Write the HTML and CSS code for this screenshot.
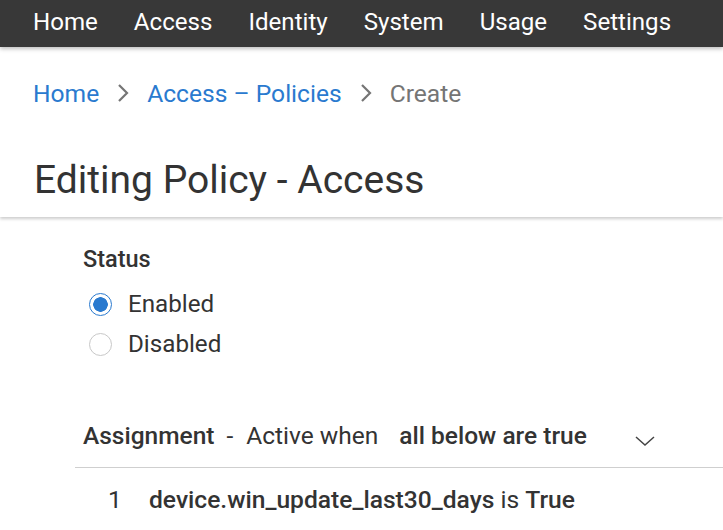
FILE: index.html
```html
<!DOCTYPE html>
<html lang="en">
<head>
<meta charset="utf-8">
<title>Editing Policy - Access</title>
<link rel="stylesheet" href="styles.css">
</head>
<body>
<header class="topbar">
  <nav class="nav">
    <a class="nav-item">Home</a>
    <a class="nav-item">Access</a>
    <a class="nav-item">Identity</a>
    <a class="nav-item">System</a>
    <a class="nav-item">Usage</a>
    <a class="nav-item">Settings</a>
  </nav>
</header>
<section class="page-head">
  <div class="crumbs">
    <a class="crumb-link">Home</a>
    <svg class="crumb-sep" viewBox="0 0 12 20" width="12" height="20"><path d="M2 2 L10 10 L2 18" fill="none" stroke="#757575" stroke-width="2.2"/></svg>
    <a class="crumb-link">Access – Policies</a>
    <svg class="crumb-sep" viewBox="0 0 12 20" width="12" height="20"><path d="M2 2 L10 10 L2 18" fill="none" stroke="#757575" stroke-width="2.2"/></svg>
    <span class="crumb-current">Create</span>
  </div>
  <h1 class="title">Editing Policy - Access</h1>
</section>
<main class="content">
  <div class="status">
    <div class="label">Status</div>
    <label class="radio"><span class="dot checked"></span><span>Enabled</span></label>
    <label class="radio"><span class="dot"></span><span>Disabled</span></label>
  </div>
  <div class="assign">
    <div class="assign-head">
      <span class="strong">Assignment</span>
      <span class="dash">-</span>
      <span>Active when</span>
      <span class="strong mode">all below are true</span>
      <svg class="caret" viewBox="0 0 20 10" width="20" height="10"><path d="M1 1 L10 9 L19 1" fill="none" stroke="#444" stroke-width="1.5"/></svg>
    </div>
    <div class="rule">
      <span class="num">1</span>
      <span><span class="strong">device.win_update_last30_days</span> is <span class="strong">True</span></span>
    </div>
  </div>
</main>
</body>
</html>
```
FILE: styles.css
```css
html, body {
  margin: 0;
  padding: 0;
  background: #fff;
  font-family: Roboto, "Noto Sans", sans-serif;
  color: #333;
}
.topbar {
  background: #383838;
  height: 47px;
  box-shadow: 0 2px 4px rgba(0,0,0,0.25);
  position: relative;
  z-index: 2;
}
.nav {
  display: flex;
  gap: 36px;
  padding-left: 33px;
  height: 47px;
  align-items: center;
}
.nav-item {
  color: #fff;
  font-size: 24.1px;
  line-height: 45px;
  margin-bottom: 2px;
}
.page-head {
  padding: 21px 0 0 33px;
  height: 170px;
  box-sizing: border-box;
  box-shadow: 0 2px 3px rgba(0,0,0,0.2);
  position: relative;
  z-index: 1;
}
.crumbs {
  display: flex;
  align-items: center;
  font-size: 24.6px;
  height: 50px;
}
.crumb-link { color: #2a7acf; }
.crumb-current { color: #757575; }
.crumb-sep { margin: 0 18px 0 18px; }
.title {
  margin: 40px 0 0 1px;
  font-size: 39px;
  font-weight: 400;
  line-height: 44px;
  color: #333;
}
.content {
  padding: 24px 0 0 75px;
}
.status {
  padding-left: 8px;
}
.label {
  font-size: 23.5px;
  font-weight: 500;
  line-height: 36px;
  margin-bottom: 7px;
}
.radio {
  display: flex;
  align-items: center;
  gap: 16px;
  font-size: 24.2px;
  height: 40px;
  padding-left: 6px;
}
.dot {
  width: 23px;
  height: 23px;
  border-radius: 50%;
  border: 1px solid #c8c8c8;
  box-sizing: border-box;
  background: #fff;
}
.dot.checked {
  border: 1.5px solid #2a7acf;
  background: radial-gradient(circle, #2a7acf 0 7px, #fff 7.5px);
}
.assign { margin-top: 53px; }
.assign-head {
  display: flex;
  align-items: flex-start;
  height: 50px;
  line-height: 38px;
  padding-left: 8px;
  font-size: 24.5px;
  border-bottom: 1px solid #cfcfcf;
}
.strong { font-weight: 500; }
.dash { margin: 0 13px 0 12px; }
.mode { margin-left: 21px; }
.caret { margin-left: 48px; margin-top: 19px; }
.rule {
  display: flex;
  align-items: center;
  height: 62px;
  padding-left: 33px;
  font-size: 24.6px;
}
.num { width: 41px; }
```
